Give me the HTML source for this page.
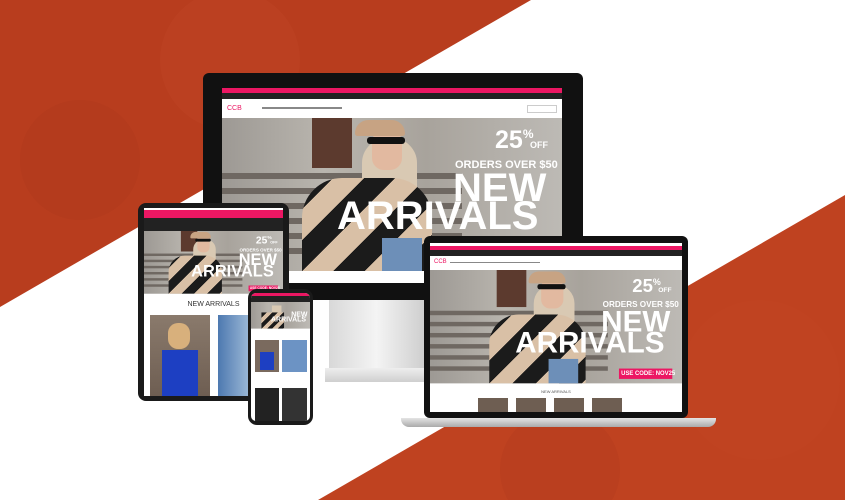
<!DOCTYPE html><html><head><style>
*{margin:0;padding:0;box-sizing:border-box}
html,body{width:845px;height:500px;overflow:hidden}
body{position:relative;background:#fff;font-family:"Liberation Sans",sans-serif}
.abs{position:absolute}
.hero{position:absolute;left:0;top:0;width:340px;height:153px;overflow:hidden;transform-origin:0 0;background:linear-gradient(90deg,#9d9994 0%,#b9b5ae 30%,#a8a39c 60%,#bdbab5 100%)}
.hero .st{position:absolute;left:0;width:240px;height:6px;background:#6f6862}
.t{position:absolute;color:#fff;font-weight:bold;white-space:nowrap;line-height:1}
.pink{background:#ec1763}
</style></head><body>
<svg class="abs" style="left:0;top:0" width="845" height="500">
<polygon points="0,0 531,0 0,307" fill="#b83d1e"/>
<polygon points="845,195 845,500 318,500" fill="#bf4220"/>
<circle cx="230" cy="60" r="70" fill="#c44c2a" opacity=".25"/>
<circle cx="80" cy="160" r="60" fill="#a9361a" opacity=".25"/>
<circle cx="760" cy="380" r="80" fill="#c94d2a" opacity=".2"/>
<circle cx="560" cy="470" r="60" fill="#ad391c" opacity=".25"/>
</svg>

<!-- monitor -->
<div class="abs" style="left:329px;top:300px;width:95px;height:70px;background:linear-gradient(90deg,#d8d8d8,#f4f4f4,#cfcfcf)"></div>
<div class="abs" style="left:325px;top:368px;width:105px;height:14px;background:linear-gradient(#eee,#cfcfcf)"></div>
<div class="abs" style="left:203px;top:73px;width:380px;height:227px;background:#111;border-radius:6px"></div>
<div class="abs" style="left:222px;top:88px;width:340px;height:195px;background:#fff;overflow:hidden">
 <div class="abs pink" style="left:0;top:0;width:340px;height:5px"></div>
 <div class="abs" style="left:0;top:5px;width:340px;height:6px;background:#222"></div>
 <div class="abs" style="left:5px;top:17px;color:#ec1763;font-size:7px">CCB</div>
 <div class="abs" style="left:40px;top:19px;width:80px;height:2px;background:#888"></div>
 <div class="abs" style="left:305px;top:17px;width:30px;height:8px;border:1px solid #ccc"></div>
 <div class="hero" style="top:30px">
  <div class="abs" style="left:90px;top:0;width:40px;height:50px;background:#5c3a2e"></div>
  <div class="st" style="top:55px"></div><div class="st" style="top:70px"></div><div class="st" style="top:85px"></div><div class="st" style="top:100px"></div><div class="st" style="top:115px"></div><div class="st" style="top:130px"></div>
  <div class="abs" style="left:140px;top:20px;width:55px;height:95px;background:#d9c9b3;border-radius:25px 25px 10px 10px"></div>
  <div class="abs" style="left:80px;top:60px;width:130px;height:93px;background:repeating-linear-gradient(135deg,#1b1b1b 0 22px,#d9c0a6 22px 44px);border-radius:40px 40px 0 0"></div>
  <div class="abs" style="left:150px;top:12px;width:30px;height:40px;background:#e2b9a0;border-radius:12px"></div>
  <div class="abs" style="left:133px;top:2px;width:50px;height:16px;background:#c7a383;border-radius:20px 20px 4px 4px"></div>
  <div class="abs" style="left:145px;top:19px;width:38px;height:7px;background:#111;border-radius:3px"></div>
  <div class="abs" style="left:160px;top:120px;width:40px;height:33px;background:#6d8fb8"></div>
  <div class="t" style="left:273px;top:10px;font-size:25px">25<span style="font-size:12px;vertical-align:top">%</span></div>
  <div class="t" style="left:308px;top:23px;font-size:9px">OFF</div>
  <div class="t" style="left:233px;top:42px;font-size:11px">ORDERS OVER $50</div>
  <div class="t" style="left:231px;top:50px;font-size:40px">NEW</div>
  <div class="t" style="left:115px;top:78px;font-size:40px">ARRIVALS</div>
 </div>
</div>

<!-- laptop -->
<div class="abs" style="left:401px;top:418px;width:315px;height:9px;background:linear-gradient(#e4e4e4,#aaa);border-radius:0 0 8px 8px"></div>
<div class="abs" style="left:424px;top:236px;width:264px;height:182px;background:#111;border-radius:6px"></div>
<div class="abs" style="left:430px;top:243px;width:252px;height:169px;background:#fff;overflow:hidden">
 <div class="abs pink" style="left:0;top:3px;width:252px;height:4px"></div>
 <div class="abs" style="left:0;top:7px;width:252px;height:6px;background:#222"></div>
 <div class="abs" style="left:4px;top:16px;color:#ec1763;font-size:6px">CCB</div>
 <div class="abs" style="left:20px;top:19px;width:90px;height:1px;background:#888"></div>
 <div class="hero" style="top:27px;transform:scale(.741)">
  <div class="abs" style="left:90px;top:0;width:40px;height:50px;background:#5c3a2e"></div>
  <div class="st" style="top:55px"></div><div class="st" style="top:70px"></div><div class="st" style="top:85px"></div><div class="st" style="top:100px"></div><div class="st" style="top:115px"></div><div class="st" style="top:130px"></div>
  <div class="abs" style="left:140px;top:20px;width:55px;height:95px;background:#d9c9b3;border-radius:25px 25px 10px 10px"></div>
  <div class="abs" style="left:80px;top:60px;width:130px;height:93px;background:repeating-linear-gradient(135deg,#1b1b1b 0 22px,#d9c0a6 22px 44px);border-radius:40px 40px 0 0"></div>
  <div class="abs" style="left:150px;top:12px;width:30px;height:40px;background:#e2b9a0;border-radius:12px"></div>
  <div class="abs" style="left:133px;top:2px;width:50px;height:16px;background:#c7a383;border-radius:20px 20px 4px 4px"></div>
  <div class="abs" style="left:145px;top:19px;width:38px;height:7px;background:#111;border-radius:3px"></div>
  <div class="abs" style="left:160px;top:120px;width:40px;height:33px;background:#6d8fb8"></div>
  <div class="t" style="left:273px;top:10px;font-size:25px">25<span style="font-size:12px;vertical-align:top">%</span></div>
  <div class="t" style="left:308px;top:23px;font-size:9px">OFF</div>
  <div class="t" style="left:233px;top:42px;font-size:11px">ORDERS OVER $50</div>
  <div class="t" style="left:231px;top:50px;font-size:40px">NEW</div>
  <div class="t" style="left:115px;top:78px;font-size:40px">ARRIVALS</div>
  <div class="abs pink t" style="left:255px;top:133px;width:72px;height:14px;font-size:8px;padding:3px">USE CODE: NOV25</div>
 </div>
 <div class="abs" style="left:0;top:146px;width:252px;text-align:center;font-size:4px;color:#555">NEW ARRIVALS</div>
 <div class="abs" style="left:48px;top:155px;width:150px;height:14px;background:repeating-linear-gradient(90deg,#6e5e52 0 30px,#fff 30px 38px)"></div>
</div>

<!-- tablet -->
<div class="abs" style="left:138px;top:203px;width:151px;height:198px;background:#1a1a1a;border-radius:8px"></div>
<div class="abs" style="left:144px;top:208px;width:139px;height:188px;background:#fff;overflow:hidden">
 <div class="abs pink" style="left:0;top:2px;width:139px;height:8px"></div>
 <div class="abs" style="left:0;top:10px;width:139px;height:13px;background:#222"></div>
 <div class="hero" style="top:23px;transform:scale(.41)">
  <div class="abs" style="left:90px;top:0;width:40px;height:50px;background:#5c3a2e"></div>
  <div class="st" style="top:55px"></div><div class="st" style="top:70px"></div><div class="st" style="top:85px"></div><div class="st" style="top:100px"></div><div class="st" style="top:115px"></div><div class="st" style="top:130px"></div>
  <div class="abs" style="left:120px;top:20px;width:55px;height:95px;background:#d9c9b3;border-radius:25px 25px 10px 10px"></div>
  <div class="abs" style="left:60px;top:60px;width:130px;height:93px;background:repeating-linear-gradient(135deg,#1b1b1b 0 22px,#d9c0a6 22px 44px);border-radius:40px 40px 0 0"></div>
  <div class="abs" style="left:130px;top:12px;width:30px;height:40px;background:#e2b9a0;border-radius:12px"></div>
  <div class="abs" style="left:113px;top:2px;width:50px;height:16px;background:#c7a383;border-radius:20px 20px 4px 4px"></div>
  <div class="abs" style="left:125px;top:19px;width:38px;height:7px;background:#111;border-radius:3px"></div>
  <div class="t" style="left:273px;top:10px;font-size:25px">25<span style="font-size:12px;vertical-align:top">%</span></div>
  <div class="t" style="left:308px;top:23px;font-size:9px">OFF</div>
  <div class="t" style="left:233px;top:42px;font-size:11px">ORDERS OVER $50</div>
  <div class="t" style="left:231px;top:50px;font-size:40px">NEW</div>
  <div class="t" style="left:115px;top:78px;font-size:40px">ARRIVALS</div>
  <div class="abs pink t" style="left:255px;top:133px;width:72px;height:14px;font-size:8px;padding:3px">USE CODE: NOV25</div>
 </div>
 <div class="abs" style="left:0;top:93px;width:139px;text-align:center;font-size:7px;color:#333">NEW ARRIVALS</div>
 <div class="abs" style="left:6px;top:107px;width:60px;height:81px;background:linear-gradient(#8a7a6c,#6e5e52)"><div class="abs" style="left:12px;top:35px;width:36px;height:46px;background:#1d3fc2"></div><div class="abs" style="left:18px;top:8px;width:22px;height:26px;background:#d8b07c;border-radius:10px"></div></div>
 <div class="abs" style="left:74px;top:107px;width:65px;height:81px;background:linear-gradient(90deg,#4d79b0,#9fbbd8,#5b86bd)"></div>
</div>

<!-- phone -->
<div class="abs" style="left:248px;top:289px;width:65px;height:136px;background:#1a1a1a;border-radius:9px"></div>
<div class="abs" style="left:251px;top:293px;width:59px;height:128px;background:#fff;overflow:hidden;border-radius:5px">
 <div class="abs pink" style="left:0;top:0;width:59px;height:3px"></div>
 <div class="abs" style="left:0;top:3px;width:59px;height:6px;background:#222"></div>
 <div class="hero" style="top:9px;transform:scale(.174)">
  <div class="abs" style="left:120px;top:20px;width:55px;height:95px;background:#d9c9b3"></div>
  <div class="abs" style="left:60px;top:60px;width:130px;height:93px;background:repeating-linear-gradient(135deg,#1b1b1b 0 22px,#d9c0a6 22px 44px)"></div>
  <div class="t" style="left:231px;top:50px;font-size:40px">NEW</div>
  <div class="t" style="left:115px;top:78px;font-size:40px">ARRIVALS</div>
 </div>
 <div class="abs" style="left:4px;top:47px;width:24px;height:32px;background:#7a6a5e"><div class="abs" style="left:5px;top:12px;width:14px;height:18px;background:#1d3fc2"></div></div>
 <div class="abs" style="left:31px;top:47px;width:25px;height:32px;background:#6c93c4"></div>
 <div class="abs" style="left:4px;top:95px;width:24px;height:33px;background:#222"></div>
 <div class="abs" style="left:31px;top:95px;width:25px;height:33px;background:#333"></div>
</div>
</body></html>
